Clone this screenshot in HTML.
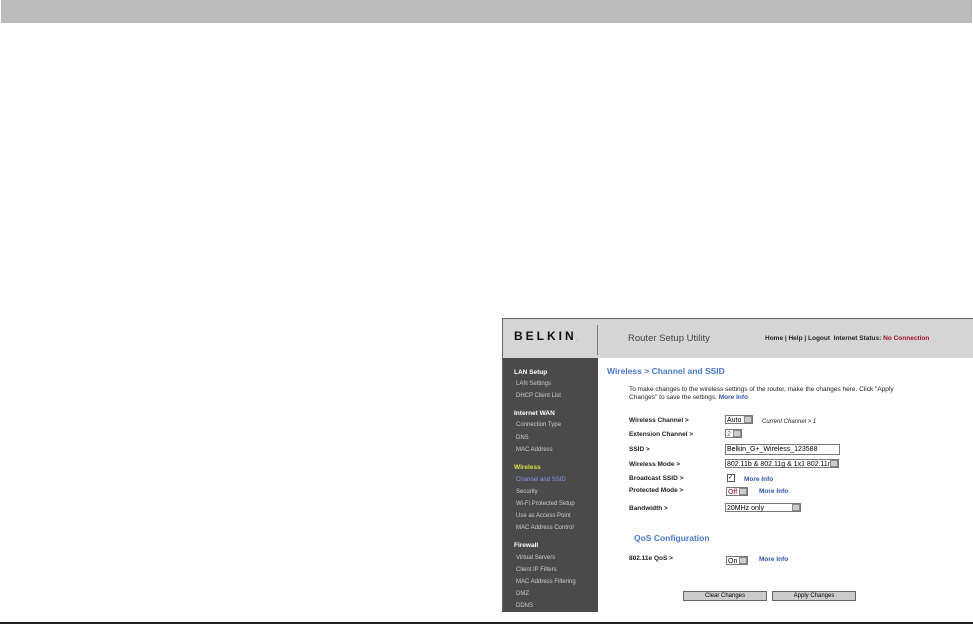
<!DOCTYPE html>
<html><head><style>
body{margin:0;width:973px;height:624px;background:#fff;position:relative;overflow:hidden;font-family:"Liberation Sans",Arial,sans-serif}
.a{position:absolute}
.t{position:absolute;font-size:7px;color:#222;white-space:nowrap}
.s{position:absolute;font-size:6px;color:#ccc;white-space:nowrap}
.h{position:absolute;font-size:6.5px;font-weight:bold;color:#fff}
.b{font-weight:bold}
.sel{position:absolute;border:1px solid #777;background:#fff;height:9px;font-size:7px;line-height:9px;padding-left:1px;box-sizing:border-box}
.sel i{position:absolute;right:0;top:0;width:8px;height:7px;background:#ccc;border:1px solid #888;box-sizing:border-box}
.mi{position:absolute;font-size:6.5px;color:#3355aa;font-weight:bold}
</style></head><body>
<div class="a" style="left:1px;top:0;width:971px;height:23px;background:#bbb"></div>
<div class="a" style="left:502px;top:318px;width:471px;height:294px;border-left:1px solid #666;border-top:1px solid #666;box-sizing:border-box"></div>
<div class="a" style="left:503px;top:319px;width:470px;height:39px;background:#d5d5d5"></div>
<div class="a" style="left:597px;top:325px;width:1px;height:30px;background:#777"></div>
<div class="t b" style="left:514px;top:329px;font-size:12px;letter-spacing:3px;color:#111">BELKIN<span style="font-size:4px;letter-spacing:0">.</span></div>
<div class="t" style="left:628px;top:333px;font-size:9.5px;color:#444">Router Setup Utility</div>
<div class="t b" style="left:765px;top:335px;font-size:6.5px;">Home | Help | Logout &nbsp;Internet Status: <span style="color:#a01030">No Connection</span></div>
<div class="a" style="left:503px;top:358px;width:95px;height:254px;background:#4a4a4a"></div>
<div class="h" style="left:514px;top:369px">LAN Setup</div>
<div class="s" style="left:516px;top:381px">LAN Settings</div>
<div class="s" style="left:516px;top:393px">DHCP Client List</div>
<div class="h" style="left:514px;top:410px">Internet WAN</div>
<div class="s" style="left:516px;top:422px">Connection Type</div>
<div class="s" style="left:516px;top:435px">DNS</div>
<div class="s" style="left:516px;top:447px">MAC Address</div>
<div class="h" style="left:514px;top:464px;color:#d8e040">Wireless</div>
<div class="s" style="left:516px;top:477px;color:#8899ee">Channel and SSID</div>
<div class="s" style="left:516px;top:489px">Security</div>
<div class="s" style="left:516px;top:501px">Wi-Fi Protected Setup</div>
<div class="s" style="left:516px;top:513px">Use as Access Point</div>
<div class="s" style="left:516px;top:525px">MAC Address Control</div>
<div class="h" style="left:514px;top:542px">Firewall</div>
<div class="s" style="left:516px;top:555px">Virtual Servers</div>
<div class="s" style="left:516px;top:567px">Client IP Filters</div>
<div class="s" style="left:516px;top:579px">MAC Address Filtering</div>
<div class="s" style="left:516px;top:591px">DMZ</div>
<div class="s" style="left:516px;top:603px">DDNS</div>
<div class="t b" style="left:607px;top:366px;font-size:8.5px;color:#4a78c8">Wireless &gt; Channel and SSID</div>
<div class="t" style="left:629px;top:386px;font-size:6.5px;line-height:7.5px">To make changes to the wireless settings of the router, make the changes here. Click "Apply<br>Changes" to save the settings. <span class="b" style="color:#3355aa">More Info</span></div>
<div class="t b" style="left:629px;top:417px;font-size:6.5px">Wireless Channel &gt;</div>
<div class="sel" style="left:725px;top:415px;width:28px">Auto<i></i></div>
<div class="t" style="left:762px;top:419px;font-size:6px;font-style:italic">Current Channel &gt; 1</div>
<div class="t b" style="left:629px;top:431px;font-size:6.5px">Extension Channel &gt;</div>
<div class="sel" style="left:725px;top:429px;width:17px;color:#666">2<i></i></div>
<div class="t b" style="left:629px;top:446px;font-size:6.5px">SSID &gt;</div>
<div class="sel" style="left:725px;top:444px;width:115px;height:11px;line-height:10px">Belkin_G+_Wireless_123588</div>
<div class="t b" style="left:629px;top:461px;font-size:6.5px">Wireless Mode &gt;</div>
<div class="sel" style="left:725px;top:459px;width:114px">802.11b &amp; 802.11g &amp; 1x1 802.11n<i></i></div>
<div class="t b" style="left:629px;top:475px;font-size:6.5px">Broadcast SSID &gt;</div>
<div class="a" style="left:727px;top:474px;width:6px;height:6px;border:1px solid #555;font-size:6px;line-height:6px">✓</div>
<div class="mi" style="left:744px;top:476px">More Info</div>
<div class="t b" style="left:629px;top:487px;font-size:6.5px">Protected Mode &gt;</div>
<div class="sel" style="left:726px;top:487px;width:22px;color:#a01030">Off<i></i></div>
<div class="mi" style="left:759px;top:488px">More Info</div>
<div class="t b" style="left:629px;top:505px;font-size:6.5px">Bandwidth &gt;</div>
<div class="sel" style="left:725px;top:503px;width:76px">20MHz only<i></i></div>
<div class="t b" style="left:634px;top:533px;font-size:8.5px;color:#4a78c8">QoS Configuration</div>
<div class="t b" style="left:629px;top:555px;font-size:6.5px">802.11e QoS &gt;</div>
<div class="sel" style="left:726px;top:556px;width:22px">On<i></i></div>
<div class="mi" style="left:759px;top:556px">More Info</div>
<div class="a" style="left:683px;top:591px;width:84px;height:10px;background:#ccc;border:1px solid #666;box-sizing:border-box;font-size:6px;text-align:center;line-height:8px">Clear Changes</div>
<div class="a" style="left:772px;top:591px;width:84px;height:10px;background:#ccc;border:1px solid #666;box-sizing:border-box;font-size:6px;text-align:center;line-height:8px">Apply Changes</div>
<div class="a" style="left:0;top:622px;width:973px;height:2px;background:#222"></div>
</body></html>
